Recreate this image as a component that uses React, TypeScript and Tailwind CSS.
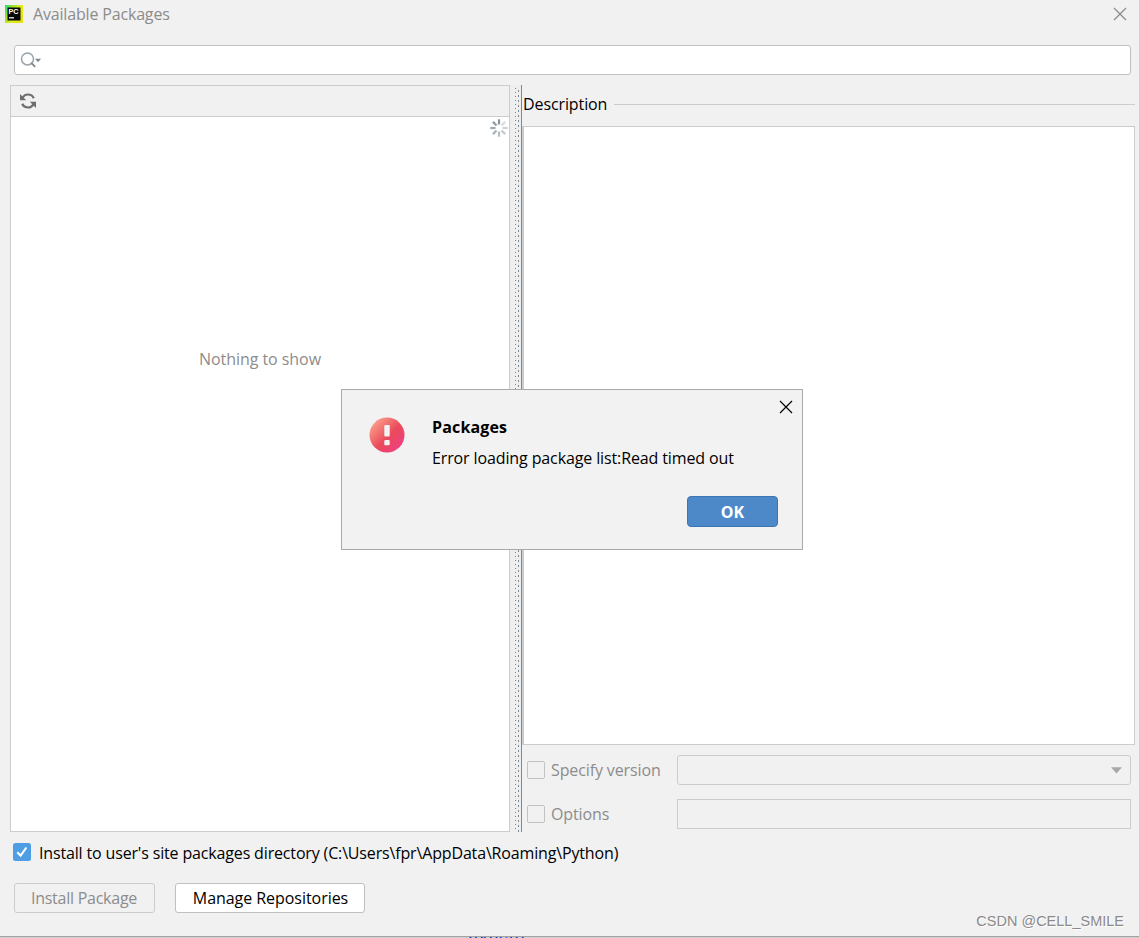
import type { ReactNode } from "react";

function AppLogo() {
  return (
    <svg width="18" height="18" viewBox="0 0 18 18" className="shrink-0">
      <defs>
        <linearGradient id="logo" x1="0" y1="0" x2="1" y2="0.6">
          <stop offset="0" stopColor="#21d789" />
          <stop offset="0.3" stopColor="#8be22b" />
          <stop offset="0.65" stopColor="#e2ec1c" />
          <stop offset="1" stopColor="#e4e216" />
        </linearGradient>
      </defs>
      <rect width="18" height="18" fill="url(#logo)" />
      <rect x="2.5" y="2.5" width="13" height="13" fill="#050805" />
      <text x="3.4" y="9.1" fontSize="7.2" fontWeight="700" fill="#fff" fontFamily="Liberation Sans, sans-serif">
        PC
      </text>
      <rect x="4" y="12.2" width="5" height="1.2" fill="#fff" />
    </svg>
  );
}

function CloseIcon({ className }: { className: string }) {
  return (
    <svg width="14" height="14" viewBox="0 0 14 14" fill="none" stroke="currentColor" strokeWidth="1.2" className={className}>
      <path d="M1 1l12 12M13 1L1 13" />
    </svg>
  );
}

function SearchIcon() {
  return (
    <svg width="22" height="18" viewBox="0 0 22 18" fill="none" className="shrink-0">
      <circle cx="7.5" cy="7.9" r="6" stroke="#9aa4ab" strokeWidth="1.5" />
      <path d="M11.2 11.8l4 4" stroke="#7f8b91" strokeWidth="1.9" />
      <path d="M15 7.8h6L18 11.2z" fill="#7f8b91" />
    </svg>
  );
}

function RefreshIcon() {
  return (
    <svg width="16" height="16" viewBox="0 0 16 16" fill="none" stroke="#6e6e6e" strokeWidth="2.2">
      <path d="M2.4 5.3C3.5 2.9 5.6 1.5 8 1.5c2.6 0 4.8 1.4 5.8 3.7M13.6 10.7c-1.1 2.4-3.2 3.8-5.6 3.8-2.6 0-4.8-1.4-5.8-3.7" />
      <path d="M0 1v6.2h6.2zM16 15V8.8H9.8z" fill="#6e6e6e" stroke="none" />
    </svg>
  );
}

const spokes = ["#87939a", "#d8dcde", "#cdd2d5", "#c4cacd", "#b7bec2", "#a8b1b6", "#9ba5ab", "#909ca2"];

function Spinner() {
  return (
    <svg width="18" height="18" viewBox="0 0 18 18">
      {spokes.map((color, i) => (
        <path key={color} d="M9 0.3v5.2" stroke={color} strokeWidth="2.2" transform={`rotate(${i * 45} 9 9)`} />
      ))}
    </svg>
  );
}

function ErrorIcon() {
  return (
    <svg width="36" height="36" viewBox="0 0 36 36" className="shrink-0">
      <defs>
        <linearGradient id="error" x1="0.1" y1="0.1" x2="0.9" y2="0.9">
          <stop offset="0" stopColor="#fba28d" />
          <stop offset="0.55" stopColor="#ea4a5b" />
          <stop offset="1" stopColor="#ee3f84" />
        </linearGradient>
      </defs>
      <circle cx="18" cy="18" r="17.5" fill="url(#error)" />
      <rect x="15.3" y="8" width="5.4" height="11.5" rx="1" fill="#f2f2f2" />
      <rect x="15.3" y="23" width="5.4" height="5.2" rx="1" fill="#f2f2f2" />
    </svg>
  );
}

function Splitter() {
  return (
    <svg width="12" height="747" className="shrink-0">
      <rect width="11" height="747" fill="#eeeeee" />
      <path d="M5.5 3V747" stroke="#7a8a99" strokeDasharray="1 3" />
      <path d="M8.5 5V747" stroke="#7a8a99" strokeDasharray="2 3" />
      <path d="M11.5 0V747" stroke="#7a8a99" />
    </svg>
  );
}

function DisabledCheck({ children }: { children: ReactNode }) {
  return (
    <div className="flex w-[150px] items-center tracking-[-0.12px] text-[#8c8c8c]">
      <span className="mr-[6px] size-[18px] rounded-[2px] border-[1.5px] border-[#c2c2c2]" />
      {children}
    </div>
  );
}

function ErrorDialog() {
  return (
    <div className="absolute top-[389px] left-[341px] flex h-[161px] w-[462px] flex-col border border-[#a9a9a9] bg-[#f2f2f2]">
      <CloseIcon className="absolute top-[10px] right-[9px] text-black" />
      <div className="flex pt-[27px] pl-[27px]">
        <ErrorIcon />
        <div className="-mt-[3px] ml-[27px]">
          <h2 className="w-fit leading-[26px] font-bold tracking-[0.15px]">Packages</h2>
          <p className="mt-[5px] w-fit leading-[26px] tracking-[-0.12px]">Error loading package list:Read timed out</p>
        </div>
      </div>
      <button className="mt-[25px] mr-[24px] h-[31px] w-[91px] self-end rounded-[4px] border border-[#3d75b2] bg-[#4d89c9] font-bold text-white">
        OK
      </button>
    </div>
  );
}

export default function App() {
  return (
    <div className="relative flex h-[938px] w-[1139px] flex-col overflow-hidden bg-[#f1f1f1] font-['Open_Sans','Noto_Sans',sans-serif] text-[16px] text-black">
      <header className="flex h-[28px] items-center pr-[12px] pl-[5px]">
        <AppLogo />
        <h1 className="ml-[10px] tracking-[-0.17px] text-[#8c8c8c]">Available Packages</h1>
        <CloseIcon className="ml-auto text-[#8a8a8a]" />
      </header>

      <div className="mt-[17px] mr-2 ml-[14px] flex h-[30px] items-center rounded-[3px] border border-[#c0c0c0] bg-white pl-[5px]">
        <SearchIcon />
      </div>

      <main className="mt-[10px] flex h-[747px] pr-1 pl-[10px]">
        <section className="flex w-[500px] flex-col border border-[#cccccc] bg-white">
          <div className="flex h-[31px] items-center border-b border-[#cccccc] bg-[#f1f1f1] pl-[9px]">
            <RefreshIcon />
          </div>
          <div className="flex justify-end pt-[2px] pr-[1px]">
            <Spinner />
          </div>
          <p className="mt-[210px] text-center tracking-[-0.05px] text-[#8c8c8c]">Nothing to show</p>
        </section>

        <Splitter />

        <section className="flex flex-1 flex-col">
          <div className="flex h-[39px] items-center pl-[1px]">
            <h2 className="pb-[2px] tracking-[-0.1px]">Description</h2>
            <span className="ml-[7px] h-px flex-1 bg-[#cccccc]" />
          </div>
          <div className="mt-[2px] h-[619px] border border-l-2 border-[#cccccc] bg-white" />
          <div className="mt-[10px] mr-1 flex h-[30px] items-center pl-[5px]">
            <DisabledCheck>Specify version</DisabledCheck>
            <div className="flex h-[30px] flex-1 items-center justify-end rounded-[3px] border border-[#cccccc] pr-2">
              <svg width="11" height="7" viewBox="0 0 11 7">
                <path d="M0 0.3h11L5.5 6.5z" fill="#a8a8a8" />
              </svg>
            </div>
          </div>
          <div className="mt-[14px] mr-1 flex h-[30px] items-center pl-[5px]">
            <DisabledCheck>Options</DisabledCheck>
            <div className="h-[30px] flex-1 border border-[#cccccc]" />
          </div>
        </section>
      </main>

      <label className="mt-[8px] flex h-[26px] items-center pl-[13px]">
        <svg width="18" height="18" viewBox="0 0 18 18" className="-mt-[2px]">
          <rect width="18" height="18" rx="2.5" fill="#4f9ee3" />
          <path d="M4.3 9.2l3.3 3.5 5.8-8.2" fill="none" stroke="#fff" strokeWidth="2.1" />
        </svg>
        <span className="ml-[8px] tracking-[-0.155px]">
          Install to user's site packages directory (C:\Users\fpr\AppData\Roaming\Python)
        </span>
      </label>

      <footer className="mt-[17px] flex h-[53px] items-start pl-[14px]">
        <button className="h-[30px] w-[141px] rounded-[3px] border border-[#cccccc] pr-px tracking-[-0.25px] text-[#8c8c8c]">
          Install Package
        </button>
        <button className="ml-[20px] h-[30px] w-[190px] rounded-[3px] border border-[#c0c0c0] bg-white pl-px tracking-[-0.05px]">
          Manage Repositories
        </button>
        <span className="mt-[28px] mr-[15px] ml-auto font-['Liberation_Sans',sans-serif] text-[14.5px] leading-[20px] text-[#8a8a8a] [text-shadow:1px_1px_0_#ffffff]">
          CSDN @CELL_SMILE
        </span>
      </footer>

      {/* sliver of the editor window behind the dialog */}
      <div className="h-[2px] overflow-hidden border-t border-[#a3a3a3] bg-[#cfcfcf] pl-[468px]">
        <p className="-mt-[5px] font-['Liberation_Mono',monospace] text-[17px] leading-[16px] text-[#0033b3]">
          execut<span className="text-black">.</span>
        </p>
      </div>

      <ErrorDialog />
    </div>
  );
}
